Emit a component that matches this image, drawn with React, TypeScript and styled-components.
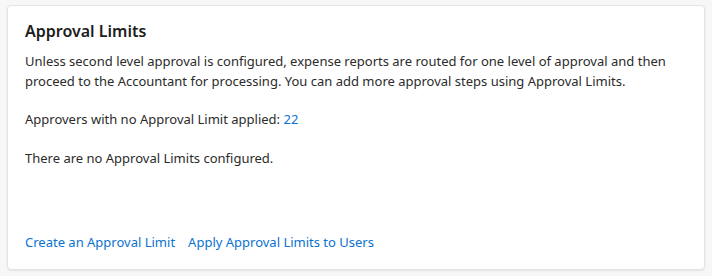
import styled, { createGlobalStyle } from "styled-components";

const GlobalStyle = createGlobalStyle`
  html, body {
    margin: 0;
    padding: 0;
    background: #f7f7f7;
  }
  body {
    font-family: "Noto Sans", "Open Sans", sans-serif;
    -webkit-font-smoothing: antialiased;
  }
`;

const Page = styled.div`
  width: 712px;
  height: 276px;
  padding: 5px 7px 0 7px;
  box-sizing: border-box;
`;

const Card = styled.section`
  box-sizing: border-box;
  height: 265px;
  background: #ffffff;
  border: 1px solid #e3e3e3;
  border-radius: 4px;
  box-shadow: 0 1px 2px rgba(0, 0, 0, 0.08);
  padding: 13px 17px 17px 17px;
  display: flex;
  flex-direction: column;
`;

const Title = styled.h2`
  margin: 0;
  font-size: 16px;
  line-height: 24px;
  font-weight: 600;
  color: #1d1d1d;
`;

const Paragraph = styled.p<{ $gap?: number }>`
  margin: ${(p) => p.$gap ?? 0}px 0 0 0;
  font-size: 13px;
  line-height: 20px;
  color: #2b2b2b;
`;

const Link = styled.a`
  color: #0b72d0;
  text-decoration: none;
  cursor: pointer;
`;

const Footer = styled.div`
  margin-top: auto;
  display: flex;
  gap: 13px;
  font-size: 13px;
  line-height: 20px;
`;

export default function App() {
  return (
    <>
      <GlobalStyle />
      <Page>
        <Card>
          <Title>Approval Limits</Title>
          <Paragraph $gap={8}>
            Unless second level approval is configured, expense reports are routed for one level of
            approval and then proceed to the Accountant for processing. You can add more approval steps
            using Approval Limits.
          </Paragraph>
          <Paragraph $gap={18}>
            Approvers with no Approval Limit applied: <Link>22</Link>
          </Paragraph>
          <Paragraph $gap={19}>There are no Approval Limits configured.</Paragraph>
          <Footer>
            <Link>Create an Approval Limit</Link>
            <Link>Apply Approval Limits to Users</Link>
          </Footer>
        </Card>
      </Page>
    </>
  );
}
